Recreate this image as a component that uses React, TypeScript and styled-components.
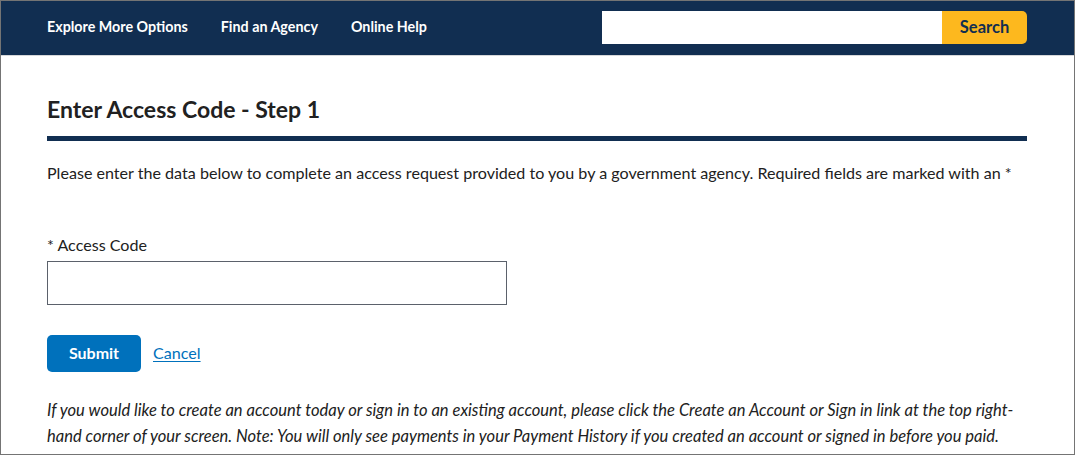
import React from "react";
import styled, { createGlobalStyle } from "styled-components";

const GlobalStyle = createGlobalStyle`
  html, body { margin: 0; padding: 0; background: #ffffff; }
  * { box-sizing: border-box; }
`;

const Page = styled.div`
  width: 1075px;
  height: 455px;
  border: 1px solid #747474;
  overflow: hidden;
  background: #ffffff;
  font-family: Lato, "Liberation Sans", sans-serif;
  color: #212121;
`;

const Header = styled.header`
  height: 55px;
  background: #112e51;
  border-bottom: 1px solid #d6d7d9;
  display: flex;
  align-items: center;
  justify-content: space-between;
  padding: 0 47px 0 46px;
`;

const Nav = styled.nav`
  display: flex;
  align-items: center;
  gap: 33px;
  margin-top: -2px;
`;

const NavLink = styled.a`
  color: #ffffff;
  font-weight: 700;
  font-size: 14.3px;
  text-decoration: none;
  line-height: 20px;
`;

const SearchForm = styled.form`
  display: flex;
  height: 33px;
  margin-top: -2px;
`;

const SearchInput = styled.input`
  width: 340px;
  height: 33px;
  border: none;
  border-radius: 0;
  padding: 0 8px;
  background: #ffffff;
  font-family: inherit;
  font-size: 15px;
  outline: none;
`;

const SearchButton = styled.button`
  width: 85px;
  height: 33px;
  border: none;
  border-radius: 0 5px 5px 0;
  background: #fdb81e;
  color: #112e51;
  font-family: inherit;
  font-weight: 700;
  font-size: 16.5px;
  padding: 0;
  cursor: pointer;
`;

const Main = styled.main`
  padding: 0 47px 0 46px;
`;

const Title = styled.h1`
  margin: 38px 0 0;
  padding-bottom: 12px;
  border-bottom: 5px solid #112e51;
  font-size: 23px;
  line-height: 30px;
  font-weight: 700;
  color: #212121;
`;

const Intro = styled.p`
  margin: 20px 0 0;
  font-size: 16.1px;
  line-height: 24px;
`;

const Field = styled.div`
  margin-top: 48px;
  display: flex;
  flex-direction: column;
  gap: 4px;
`;

const Label = styled.label`
  font-size: 16.1px;
  line-height: 24px;
`;

const TextInput = styled.input`
  width: 460px;
  height: 44px;
  border: 1px solid #5b616b;
  border-radius: 0;
  padding: 0 10px;
  font-family: inherit;
  font-size: 16px;
  outline: none;
`;

const Actions = styled.div`
  margin-top: 30px;
  display: flex;
  align-items: center;
  gap: 12px;
`;

const SubmitButton = styled.button`
  width: 94px;
  height: 37px;
  border: none;
  border-radius: 5px;
  background: #0071bc;
  color: #ffffff;
  font-family: inherit;
  font-weight: 700;
  font-size: 16px;
  line-height: 35px;
  padding: 0 0 2px;
  cursor: pointer;
`;

const CancelLink = styled.a`
  color: #0071bc;
  font-size: 16.1px;
  text-decoration: underline;
  text-underline-offset: 2px;
  margin-top: -2px;
`;

const Note = styled.p`
  margin: 25px 0 0;
  font-style: italic;
  font-size: 16.55px;
  line-height: 26px;
`;

export default function App() {
  return (
    <Page>
      <GlobalStyle />
      <Header>
        <Nav>
          <NavLink href="#">Explore More Options</NavLink>
          <NavLink href="#">Find an Agency</NavLink>
          <NavLink href="#">Online Help</NavLink>
        </Nav>
        <SearchForm onSubmit={(e) => e.preventDefault()}>
          <SearchInput type="search" aria-label="Search" />
          <SearchButton type="submit">Search</SearchButton>
        </SearchForm>
      </Header>
      <Main>
        <Title>Enter Access Code - Step 1</Title>
        <Intro>
          Please enter the data below to complete an access request provided to you by a government agency. Required fields are marked with an *
        </Intro>
        <Field>
          <Label htmlFor="code">* Access Code</Label>
          <TextInput id="code" type="text" />
        </Field>
        <Actions>
          <SubmitButton type="button">Submit</SubmitButton>
          <CancelLink href="#">Cancel</CancelLink>
        </Actions>
        <Note>
          If you would like to create an account today or sign in to an existing account, please click the Create an Account or Sign in link at the top right-hand corner of your screen. Note: You will only see payments in your Payment History if you created an account or signed in before you paid.
        </Note>
      </Main>
    </Page>
  );
}
